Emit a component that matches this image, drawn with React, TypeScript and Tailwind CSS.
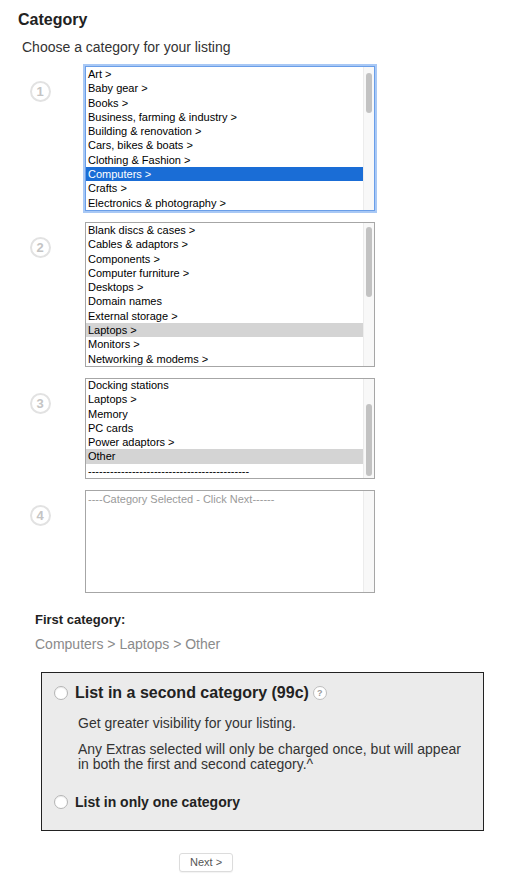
import React from "react";

type ListProps = {
  items: string[];
  selected?: number;
  selStyle?: "blue" | "gray";
  height: number;
  focused?: boolean;
  thumb?: { top: number; height: number } | null;
  offset?: number;
  placeholder?: boolean;
};

function StepCircle({ n }: { n: number }) {
  return (
    <div className="w-[40px] flex justify-center pt-[15px] shrink-0">
      <div className="w-[21px] h-[21px] rounded-full border-2 border-[#e2e2e2] flex items-center justify-center text-[13px] font-bold text-[#c4c4c4] leading-none">
        {n}
      </div>
    </div>
  );
}

function ListBox({ items, selected, selStyle = "gray", height, focused, thumb, offset = 0, placeholder }: ListProps) {
  return (
    <div
      className={
        "relative w-[290px] bg-white overflow-hidden flex " +
        (focused
          ? "border border-[#6a9ee8] shadow-[0_0_0_2px_#a8c8f5]"
          : "border border-[#a6a6a6]")
      }
      style={{ height }}
    >
      <div className="flex-1 overflow-hidden">
        <div style={{ marginTop: offset }}>
          {items.map((it, i) => (
            <div
              key={i}
              className={
                "h-[14.3px] leading-[14.3px] pl-[2px] text-[11px] whitespace-nowrap " +
                (placeholder ? "text-[#9a9a9a] " : "text-black ") +
                (selected === i
                  ? selStyle === "blue"
                    ? "bg-[#1a6dd6] text-white"
                    : "bg-[#d4d4d4]"
                  : "")
              }
            >
              {it}
            </div>
          ))}
        </div>
      </div>
      <div className="relative w-[11px] bg-[#f8f8f8] border-l border-[#ececec] shrink-0">
        {thumb && (
          <div
            className="absolute left-[2px] w-[6px] rounded-full bg-[#c2c2c2]"
            style={{ top: thumb.top, height: thumb.height }}
          />
        )}
      </div>
    </div>
  );
}

function Radio() {
  return <div className="w-[14px] h-[14px] rounded-full border border-[#b5b5b5] bg-white shadow-[inset_0_1px_1px_rgba(0,0,0,0.08)] shrink-0" />;
}

export default function App() {
  const list1 = [
    "Art >",
    "Baby gear >",
    "Books >",
    "Business, farming & industry >",
    "Building & renovation >",
    "Cars, bikes & boats >",
    "Clothing & Fashion >",
    "Computers >",
    "Crafts >",
    "Electronics & photography >",
  ];
  const list2 = [
    "Blank discs & cases >",
    "Cables & adaptors >",
    "Components >",
    "Computer furniture >",
    "Desktops >",
    "Domain names",
    "External storage >",
    "Laptops >",
    "Monitors >",
    "Networking & modems >",
  ];
  const list3 = [
    "Docking stations",
    "Laptops >",
    "Memory",
    "PC cards",
    "Power adaptors >",
    "Other",
    "--------------------------------------------",
  ];
  return (
    <div
      className="w-[524px] h-[886px] bg-white text-[#333]"
      style={{ fontFamily: '"Liberation Sans", Arial, Helvetica, sans-serif' }}
    >
      <div className="pl-[18px] pt-[10px]">
        <h1 className="text-[16px] font-bold text-[#222] leading-[20px]">Category</h1>
        <p className="mt-[7px] ml-[4px] text-[14px] leading-[20px] text-[#333]">
          Choose a category for your listing
        </p>
      </div>

      <div className="flex flex-col gap-[11px] mt-[9px] pl-[20px]">
        <div className="flex items-start">
          <StepCircle n={1} />
          <div className="ml-[25px]">
            <ListBox items={list1} selected={7} selStyle="blue" height={145} focused thumb={{ top: 6, height: 40 }} />
          </div>
        </div>
        <div className="flex items-start">
          <StepCircle n={2} />
          <div className="ml-[25px]">
            <ListBox items={list2} selected={7} height={145} thumb={{ top: 4, height: 70 }} />
          </div>
        </div>
        <div className="flex items-start">
          <StepCircle n={3} />
          <div className="ml-[25px]">
            <ListBox items={list3} selected={5} height={101} thumb={{ top: 25, height: 72 }} offset={-1} />
          </div>
        </div>
        <div className="flex items-start">
          <StepCircle n={4} />
          <div className="ml-[25px]">
            <ListBox items={["----Category Selected - Click Next------"]} height={103} placeholder thumb={null} offset={1} />
          </div>
        </div>
      </div>

      <div className="pl-[35px] mt-[18px]">
        <div className="text-[13px] font-bold text-[#222] leading-[18px]">First category:</div>
        <div className="mt-[6px] text-[14px] text-[#8a8a8a] leading-[18px]">Computers &gt; Laptops &gt; Other</div>
      </div>

      <div className="ml-[41px] mt-[19px] w-[443px] h-[159px] bg-[#ebebeb] border border-[#222] pl-[12px] pt-[10px]">
        <div className="flex items-center gap-[7px]">
          <Radio />
          <span className="text-[16px] font-bold text-[#222] leading-[20px]">List in a second category (99c)</span>
          <span className="ml-[-3px] w-[14px] h-[14px] rounded-full border border-[#bdbdbd] bg-white flex items-center justify-center text-[9px] font-bold text-[#9a9a9a] leading-none">
            ?
          </span>
        </div>
        <div className="pl-[24px] mt-[13px] w-[430px] text-[14px] text-[#333] leading-[15px]">
          <p>Get greater visibility for your listing.</p>
          <p className="mt-[11px] w-[392px]">
            Any Extras selected will only be charged once, but will appear in both the first and second category.^
          </p>
        </div>
        <div className="flex items-center gap-[7px] mt-[21px]">
          <Radio />
          <span className="text-[14px] font-bold text-[#222] leading-[18px]">List in only one category</span>
        </div>
      </div>

      <div className="flex justify-start pl-[179px] mt-[22px]">
        <button className="h-[19px] px-[10px] border border-[#dcdcdc] rounded-[3px] bg-white text-[11px] text-[#555] leading-none shadow-[0_1px_1px_rgba(0,0,0,0.05)]">
          Next &gt;
        </button>
      </div>
    </div>
  );
}
